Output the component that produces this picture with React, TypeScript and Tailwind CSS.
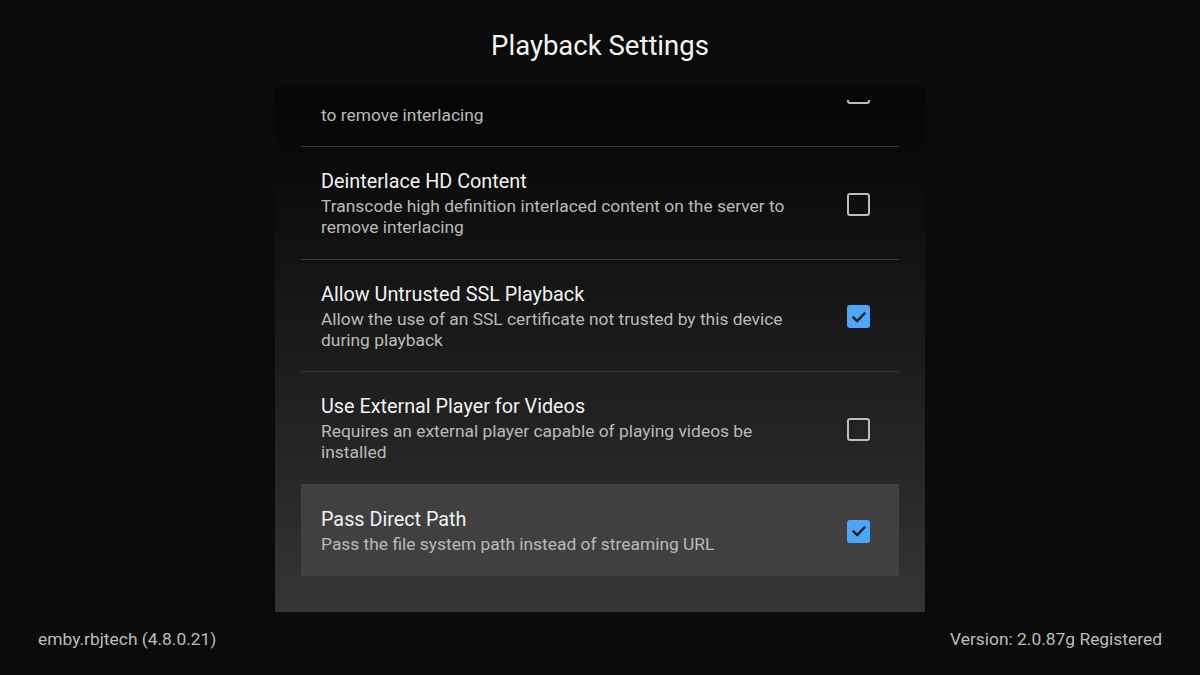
const FONT = { fontFamily: "Roboto, 'Noto Sans', 'Liberation Sans', sans-serif" };

type Setting = {
  title: string;
  description: string;
  checked: boolean;
  focused?: boolean;
};

const SETTINGS: Setting[] = [
  {
    title: "Deinterlace SD Content",
    description: "Transcode standard definition interlaced content on the server to remove interlacing",
    checked: false,
  },
  {
    title: "Deinterlace HD Content",
    description: "Transcode high definition interlaced content on the server to remove interlacing",
    checked: false,
  },
  {
    title: "Allow Untrusted SSL Playback",
    description: "Allow the use of an SSL certificate not trusted by this device during playback",
    checked: true,
  },
  {
    title: "Use External Player for Videos",
    description: "Requires an external player capable of playing videos be installed",
    checked: false,
  },
  {
    title: "Pass Direct Path",
    description: "Pass the file system path instead of streaming URL",
    checked: true,
    focused: true,
  },
];

function Checkbox({ checked }: { checked: boolean }) {
  if (checked) {
    return (
      <div className="flex h-[23px] w-[23px] shrink-0 items-center justify-center rounded-[3px] bg-[#4fa5f6]">
        <svg width="18" height="18" viewBox="0 0 24 24" fill="none">
          <path d="M4.5 12.5l5 5L19.5 7" stroke="#1f1f1f" strokeWidth="3.2" strokeLinecap="round" strokeLinejoin="round" />
        </svg>
      </div>
    );
  }
  return <div className="h-[23px] w-[23px] shrink-0 rounded-[3px] border-2 border-[#bdbdbd]" />;
}

function SettingRow({ item, first }: { item: Setting; first: boolean }) {
  return (
    <div
      className={`flex items-center pl-[20px] pr-[29px] ${
        item.focused ? "bg-[#404040] pt-[24px] pb-[21px]" : "pt-[23px] pb-[20.4px]"
      } ${first || item.focused ? "" : "border-t border-[#3a3a3a]"}`}
    >
      <div className="flex-1">
        <div className="text-[19.8px] leading-[24px] text-[#f2f2f2]">{item.title}</div>
        <div className="mt-[2px] max-w-[488px] text-[17.4px] leading-[21px] text-[#bababa]">{item.description}</div>
      </div>
      <Checkbox checked={item.checked} />
    </div>
  );
}

export default function App() {
  return (
    <div className="flex h-[675px] w-[1200px] flex-col bg-[#0b0b0b]" style={FONT}>
      <h1 className="pt-[30px] text-center text-[27.5px] leading-[32px] text-[#f4f4f4]">Playback Settings</h1>

      <div className="mx-auto mt-[25px] h-[525px] w-[650px] bg-gradient-to-b from-[#050505] to-[#353535] pt-[13px]">
        <div className="h-[512px] overflow-hidden px-[26px]">
          <div className="-mt-[65px]">
            {SETTINGS.map((item, i) => (
              <SettingRow key={item.title} item={item} first={i === 0} />
            ))}
          </div>
        </div>
      </div>

      <div className="flex items-center justify-between px-[38px] pt-[17px] text-[17.4px] leading-[20px] text-[#bdbdbd]">
        <span>emby.rbjtech (4.8.0.21)</span>
        <span>Version: 2.0.87g Registered</span>
      </div>
    </div>
  );
}
